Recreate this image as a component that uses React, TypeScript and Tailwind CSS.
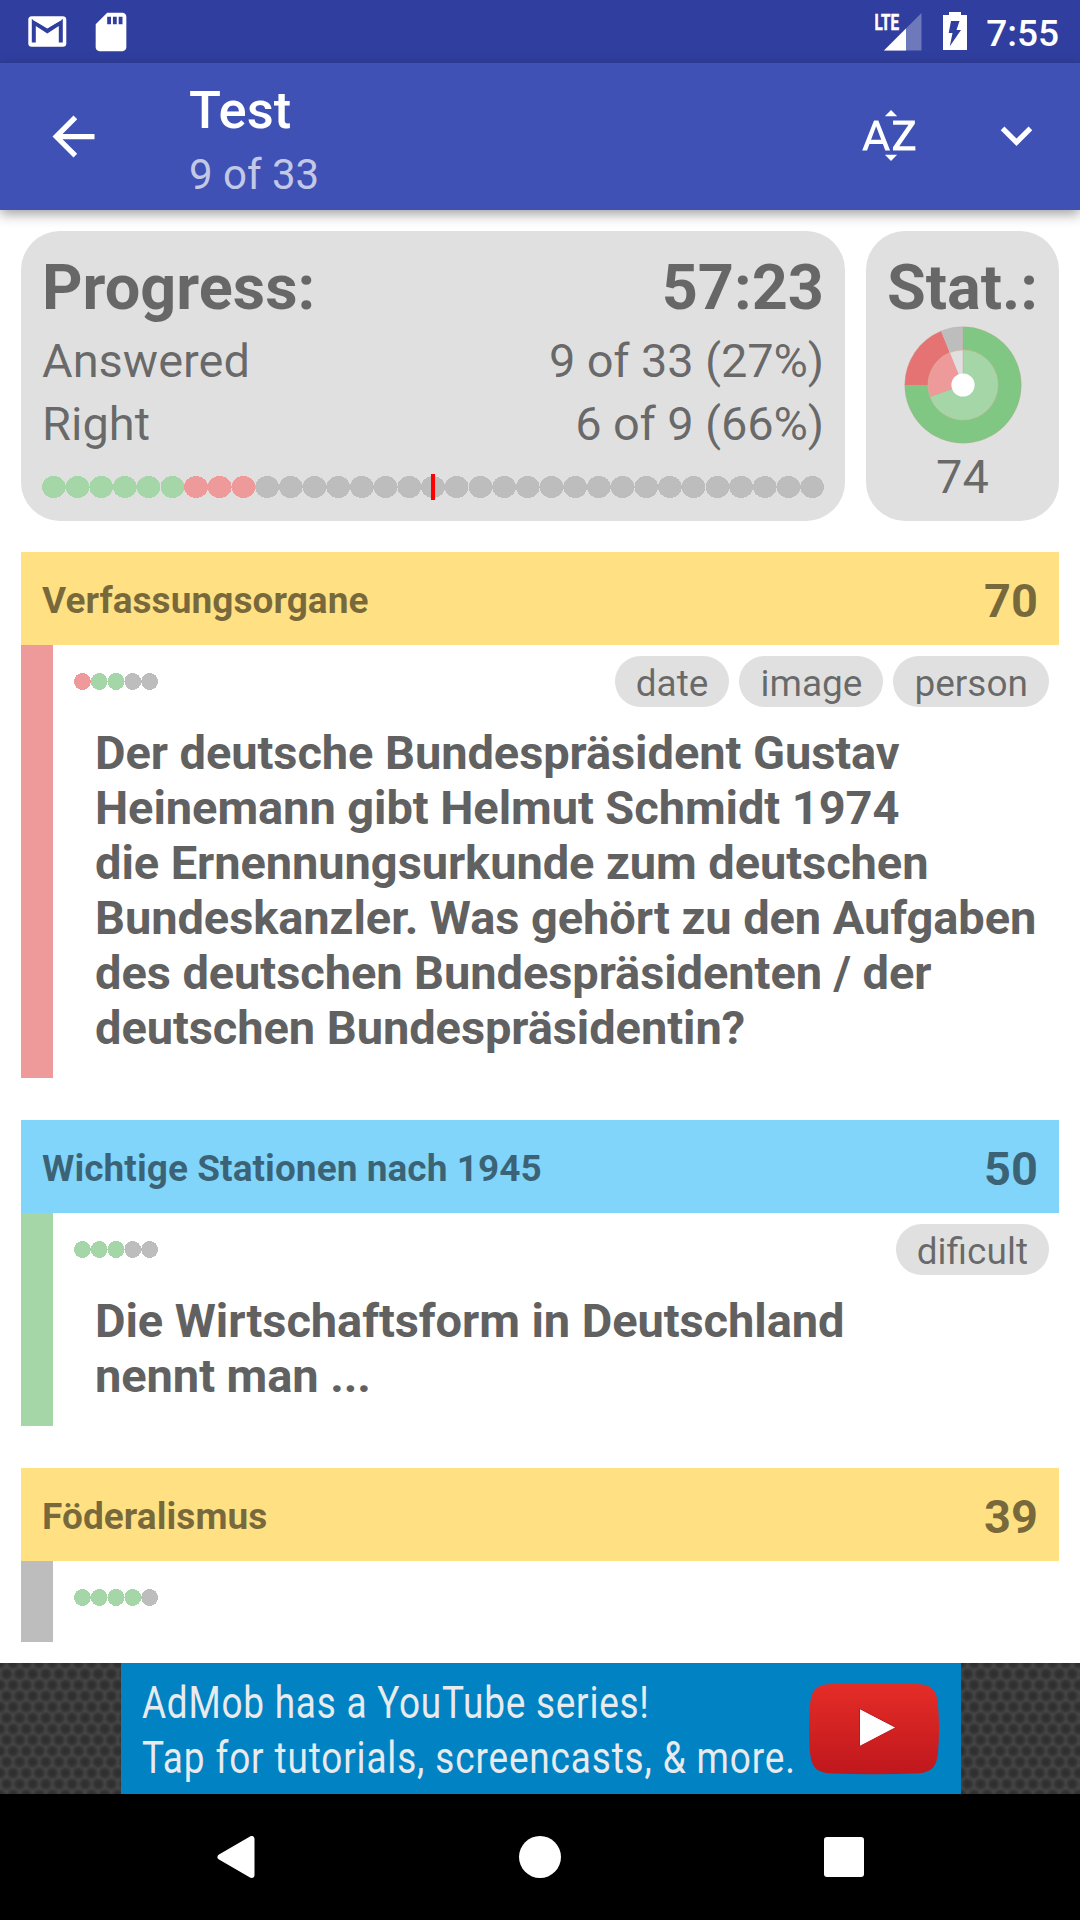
import { MdArrowBack, MdExpandMore, MdSdCard, MdSortByAlpha } from "react-icons/md";

type Mark = "right" | "wrong" | "open";

const markFill: Record<Mark, string> = {
  right: "fill-[#a5d6a7]",
  wrong: "fill-[#ef9a9a]",
  open: "fill-[#bdbdbd]",
};

const repeat = (mark: Mark, count: number): Mark[] => Array.from({ length: count }, () => mark);

function Dots({ marks, width, height }: { marks: Mark[]; width: number; height: number }) {
  const step = width / marks.length;
  return (
    <svg className="block shrink-0" width={width} height={height} shapeRendering="crispEdges">
      {marks.map((mark, i) => (
        <ellipse
          key={i}
          className={markFill[mark]}
          cx={step * (i + 0.5)}
          cy={height / 2}
          rx={step / 2}
          ry={height / 2}
        />
      ))}
    </svg>
  );
}

function slice(radius: number, from: number, to: number) {
  const point = (deg: number) => {
    const a = (deg * Math.PI) / 180;
    return `${(radius * Math.sin(a)).toFixed(2)} ${(-radius * Math.cos(a)).toFixed(2)}`;
  };
  return `M0 0L${point(from)}A${radius} ${radius} 0 ${to - from > 180 ? 1 : 0} 1 ${point(to)}Z`;
}

function StatPie() {
  return (
    <svg className="block" width="118" height="118" viewBox="-59 -59 118 118">
      <path d={slice(58.3, 0, 270)} fill="#81c784" />
      <path d={slice(58.3, 270, 338)} fill="#e57373" />
      <path d={slice(58.3, 338, 360)} fill="#bdbdbd" />
      <path d={slice(35, 0, 250)} fill="#a5d6a7" />
      <path d={slice(35, 250, 338)} fill="#ef9a9a" />
      <path d={slice(35, 338, 360)} fill="#e0e0e0" />
      <circle r="58.3" fill="none" stroke="#c0a088" strokeOpacity="0.4" strokeWidth="0.7" />
      <circle r="35" fill="none" stroke="#d8b89c" strokeOpacity="0.7" strokeWidth="0.8" />
      <path d="M0 0V-58" stroke="#c0a088" strokeOpacity="0.5" strokeWidth="0.7" />
      <circle r="11.6" fill="#fff" />
    </svg>
  );
}

function StatusBar() {
  return (
    <div className="flex h-[63px] shrink-0 items-start bg-[#303f9f] text-white">
      <svg className="mt-4 ml-7 block" width="39" height="31" viewBox="0 0 39 31">
        <rect x="0.3" y="0.3" width="38" height="30.4" rx="3.5" fill="#fff" />
        <path d="M5.8 26.5V6.3L19.3 15L32.8 6.3V26.5" fill="none" stroke="#303f9f" strokeWidth="4" />
        <path d="M3.9 3.5H34.7L19.3 12Z" fill="#fff" />
      </svg>
      <MdSdCard className="mt-[9px] ml-[21px] size-[46px]" />
      <div className="flex-1" />
      <svg className="mt-1 block" width="47" height="47" viewBox="0 -9 47 47">
        <path d="M46.5 0V37.5H9Z" fill="#fff" fillOpacity="0.3" />
        <path d="M31 15.5V37.5H9Z" fill="#fff" />
        <text
          x="-0.5"
          y="16.8"
          fill="#fff"
          stroke="#fff"
          strokeWidth="0.6"
          fontFamily="Roboto"
          fontWeight="700"
          fontSize="22.5"
          textLength="24.5"
          lengthAdjust="spacingAndGlyphs"
        >
          LTE
        </text>
      </svg>
      <svg className="mt-3 ml-[21px] block" width="24" height="38" viewBox="0 0 24 38">
        <path d="M6 0H18V3H24V38H0V3H6Z" fill="#fff" />
        <path d="M8 9H16.5L13.5 18H18L6.8 34.3L9.5 21H5.7Z" fill="#303f9f" />
      </svg>
      <span className="mt-3 mr-[21px] ml-[19px] text-[37px] leading-[44px] font-medium">7:55</span>
    </div>
  );
}

function Toolbar() {
  return (
    <header className="relative z-10 flex h-[147px] shrink-0 bg-[#3f51b5] text-white shadow-[0_4px_12px_rgba(0,0,0,0.38)]">
      <MdArrowBack className="mt-[42px] ml-[42px] size-[63px]" />
      <div className="ml-[84px] flex-1">
        <div className="mt-4 text-[52.5px] leading-[62px] font-medium">Test</div>
        <div className="mt-[9px] text-[42px] leading-[50px] text-white/70">9 of 33</div>
      </div>
      <MdSortByAlpha className="mt-[41px] size-[63px]" />
      <MdExpandMore className="mt-[41px] mr-8 ml-16 size-[63px]" />
    </header>
  );
}

function Row({ label, value }: { label: string; value: string }) {
  return (
    <div className="flex h-[63px] items-center justify-between text-[47px] leading-[55px]">
      <span>{label}</span>
      <span className="tracking-[-0.15px]">{value}</span>
    </div>
  );
}

function Summary() {
  return (
    <section className="flex h-[290px] gap-[21px] text-black/54">
      <div className="w-[824px] rounded-[39px] bg-[#e0e0e0] px-[21px] pt-5">
        <div className="flex justify-between text-[63px] leading-[74px] font-bold">
          <span>Progress:</span>
          <span>57:23</span>
        </div>
        <div className="mt-1">
          <Row label="Answered" value="9 of 33 (27%)" />
          <Row label="Right" value="6 of 9 (66%)" />
        </div>
        <div className="relative mt-[21px]">
          <Dots marks={[...repeat("right", 6), ...repeat("wrong", 3), ...repeat("open", 24)]} width={782} height={22} />
          <div className="absolute -top-[2px] left-[389px] h-[26px] w-1 bg-[#ff0000]" />
        </div>
      </div>
      <div className="flex w-[193px] flex-col items-center rounded-[39px] bg-[#e0e0e0] pt-5">
        <div className="text-[63px] leading-[74px] font-bold">Stat.:</div>
        <div className="mt-px">
          <StatPie />
        </div>
        <div className="mt-[5px] text-[47px] leading-[55px]">74</div>
      </div>
    </section>
  );
}

interface Question {
  topic: string;
  score: number;
  head: string;
  bar: string;
  marks: Mark[];
  tags: string[];
  lines: string[];
}

const questions: Question[] = [
  {
    topic: "Verfassungsorgane",
    score: 70,
    head: "bg-[#ffe082]",
    bar: "h-[433px] bg-[#ef9a9a]",
    marks: ["wrong", "right", "right", "open", "open"],
    tags: ["date", "image", "person"],
    lines: [
      "Der deutsche Bundespräsident Gustav",
      "Heinemann gibt Helmut Schmidt 1974",
      "die Ernennungsurkunde zum deutschen",
      "Bundeskanzler. Was gehört zu den Aufgaben",
      "des deutschen Bundespräsidenten / der",
      "deutschen Bundespräsidentin?",
    ],
  },
  {
    topic: "Wichtige Stationen nach 1945",
    score: 50,
    head: "bg-[#81d4fa]",
    bar: "h-[213px] bg-[#a5d6a7]",
    marks: ["right", "right", "right", "open", "open"],
    tags: ["dificult"],
    lines: ["Die Wirtschaftsform in Deutschland", "nennt man ..."],
  },
  {
    topic: "Föderalismus",
    score: 39,
    head: "bg-[#ffe082]",
    bar: "h-[81px] bg-[#bdbdbd]",
    marks: ["right", "right", "right", "right", "open"],
    tags: [],
    lines: [],
  },
];

function QuestionCard({ topic, score, head, bar, marks, tags, lines }: Question) {
  return (
    <article>
      <div className={`flex h-[93px] items-center justify-between px-[21px] font-bold text-black/54 ${head}`}>
        <h2 className="mt-[3px] text-[37px] leading-[43px] tracking-[0.05px]">{topic}</h2>
        <span className="mt-[3px] text-[47px] leading-[55px]">{score}</span>
      </div>
      <div className="flex">
        <div className={`w-8 shrink-0 ${bar}`} />
        <div className="flex-1">
          <div className="flex items-start justify-between pt-[11px] pr-[10px] pl-[21px]">
            <div className="mt-[17px]">
              <Dots marks={marks} width={84} height={17} />
            </div>
            <div className="flex gap-[10px]">
              {tags.map((tag) => (
                <span
                  key={tag}
                  className="flex h-[51px] items-center rounded-[26px] bg-[#e0e0e0] px-[21px] pt-[3px] text-[37px] leading-[43px] text-black/54"
                >
                  {tag}
                </span>
              ))}
            </div>
          </div>
          {lines.length > 0 && (
            <p className="mt-[18px] pl-[42px] text-[47px] leading-[55px] font-bold tracking-[-0.07px] whitespace-nowrap text-[#616161]">
              {lines.map((line) => (
                <span key={line} className="block">
                  {line}
                </span>
              ))}
            </p>
          )}
        </div>
      </div>
    </article>
  );
}

function AdBanner() {
  const texture =
    "bg-[#464646] bg-[radial-gradient(circle_at_center,#2d2d2d_0,#333333_3.5px,transparent_7px),radial-gradient(circle_at_center,#2d2d2d_0,#333333_3.5px,transparent_7px)] bg-size-[13.1px_22px] bg-position-[0_0,6.55px_11px]";
  return (
    <aside className="flex h-[131px] shrink-0">
      <div className={`w-[121px] ${texture}`} />
      <div className="flex w-[840px] bg-[#0082c3] text-[#e8eaed]">
        <div className="w-[687px] pt-[13px] pl-[21px] text-[44.5px] leading-[55px] whitespace-nowrap">
          <div className="w-fit origin-left scale-x-[0.83] tracking-[0.92px]">AdMob has a YouTube series!</div>
          <div className="w-fit origin-left scale-x-[0.83] tracking-[1.04px]">Tap for tutorials, screencasts, &amp; more.</div>
        </div>
        <svg className="mt-5 block" width="132" height="92" viewBox="0 0 132 92">
          <defs>
            <linearGradient id="play" x1="0" y1="0" x2="0" y2="1">
              <stop offset="0" stopColor="#e52d27" />
              <stop offset="1" stopColor="#bf171d" />
            </linearGradient>
          </defs>
          <path
            d="M20 1.2Q66-1 112 1.2C124 2 129 8 130 22Q132 46 130 69C129 83 124 89 112 90.2Q66 92.5 20 90.2C8 89 3 83 2 69Q0 46 2 22C3 8 8 2 20 1.2Z"
            fill="url(#play)"
          />
          <path d="M51.5 25.5V63.5L88 44.5Z" fill="#fff" stroke="#c4161c" strokeWidth="1" />
        </svg>
      </div>
      <div className={`flex-1 ${texture}`} />
    </aside>
  );
}

function NavBar() {
  return (
    <nav className="flex h-[126px] shrink-0 items-center bg-black">
      <svg className="ml-[217px] block" width="38" height="42" viewBox="0 0 38 42">
        <path d="M3.5 21L34.5 3V39Z" fill="#fff" stroke="#fff" strokeWidth="6" strokeLinejoin="round" />
      </svg>
      <div className="ml-[264px] size-[42px] rounded-full bg-white" />
      <div className="ml-[263px] size-10 rounded-[3px] bg-white" />
    </nav>
  );
}

export default function App() {
  return (
    <div className="flex h-[1920px] w-[1080px] flex-col overflow-hidden bg-white font-['Roboto',sans-serif]">
      <StatusBar />
      <Toolbar />
      <main className="flex-1 overflow-hidden px-[21px] pt-[21px]">
        <Summary />
        <div className="mt-[31px] flex flex-col gap-[42px]">
          {questions.map((q) => (
            <QuestionCard key={q.topic} {...q} />
          ))}
        </div>
      </main>
      <AdBanner />
      <NavBar />
    </div>
  );
}
